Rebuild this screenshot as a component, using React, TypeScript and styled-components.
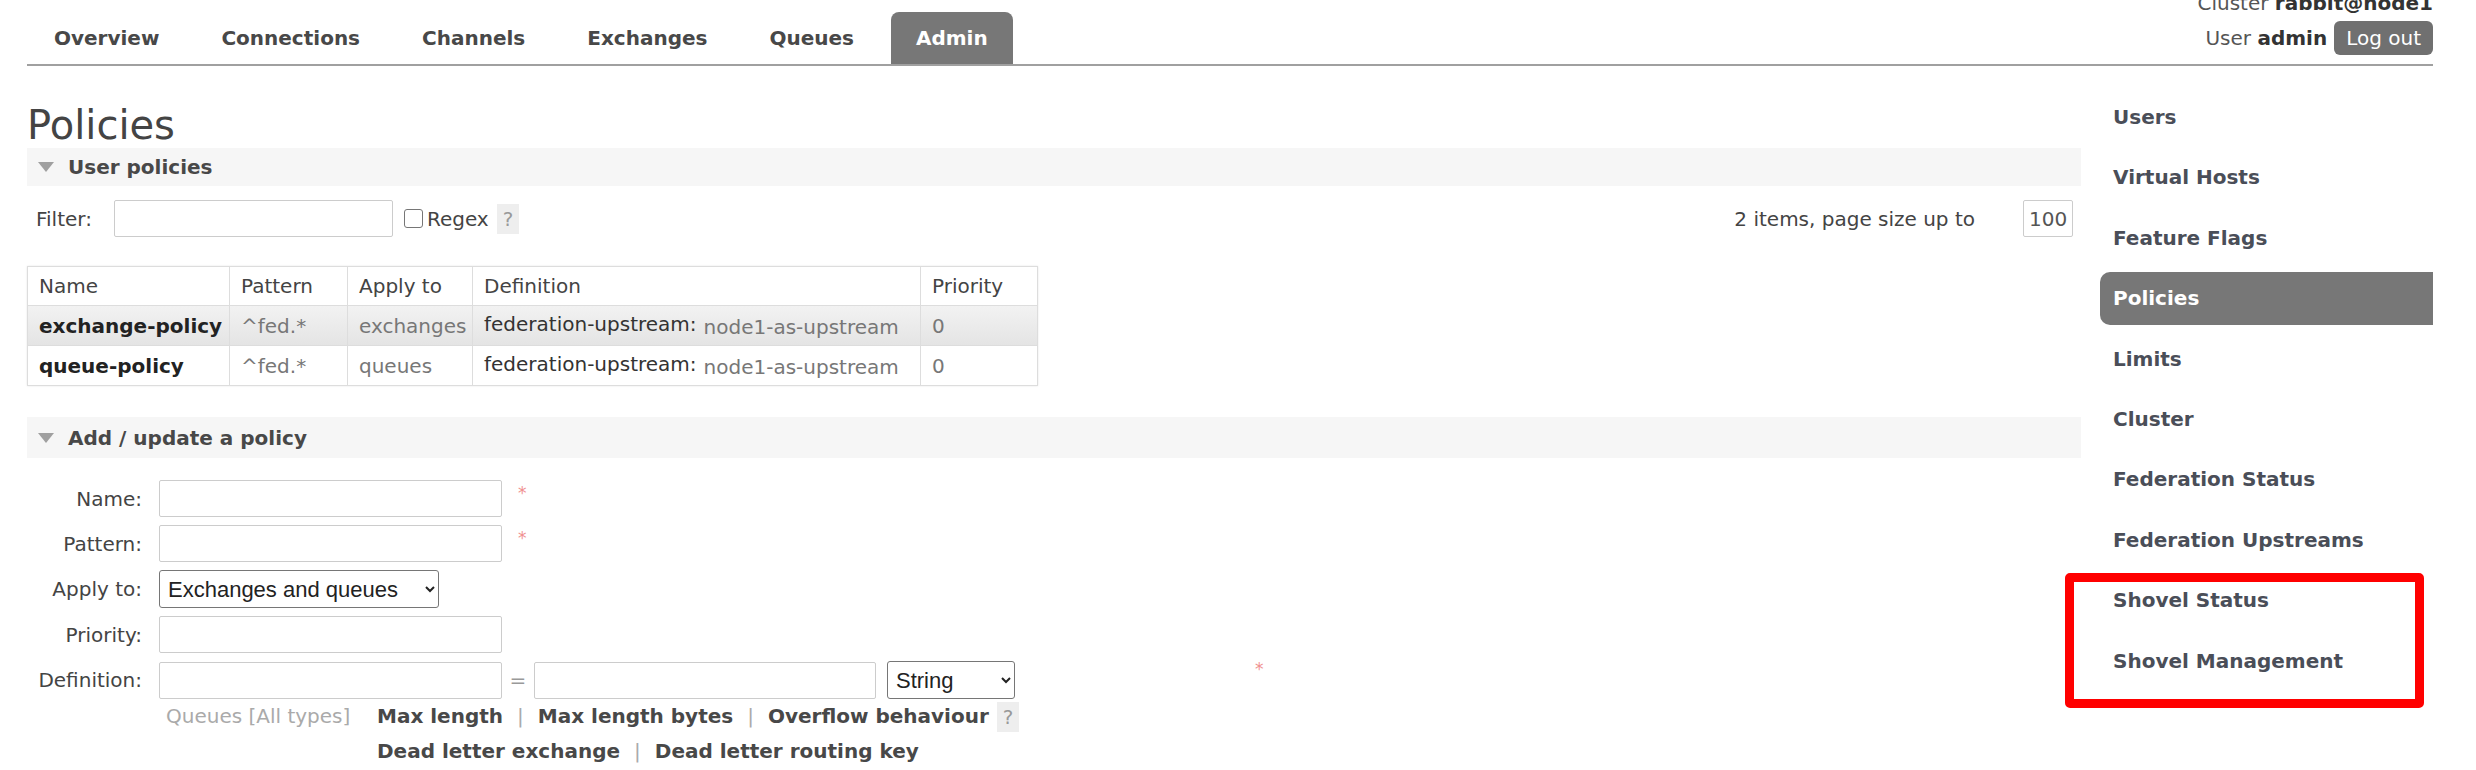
import React from "react";
import styled, { createGlobalStyle } from "styled-components";

const font = `"DejaVu Sans", Verdana, sans-serif`;

const GlobalStyle = createGlobalStyle`
  body {
    margin: 0;
    background: #fff;
    color: #444;
    font-family: ${font};
    font-size: 20px;
  }
`;

const Header = styled.header`
  display: flex;
  justify-content: space-between;
  align-items: flex-end;
  height: 66px;
  margin: 0 43px 0 27px;
  border-bottom: 2px solid #a0a0a0;
  box-sizing: border-box;
`;

const Tabs = styled.nav`
  display: flex;
  gap: 12px;
  padding-left: 2px;
`;

const Tab = styled.a<{ $active?: boolean }>`
  display: block;
  height: 52px;
  line-height: 52px;
  padding: 0 25px;
  font-size: 20px;
  font-weight: bold;
  text-decoration: none;
  color: ${(p) => (p.$active ? "#fff" : "#484848")};
  background: ${(p) => (p.$active ? "#777" : "transparent")};
  border-radius: 8px 8px 0 0;
`;

const Session = styled.div`
  align-self: flex-start;
  margin-top: -15px;
  display: flex;
  flex-direction: column;
  align-items: flex-end;
  color: #555;
`;

const SessionLine = styled.div`
  display: flex;
  align-items: center;
  gap: 7px;
  height: 35px;
  b {
    color: #333;
  }
`;

const LogOut = styled.button`
  height: 34px;
  padding: 0 12px;
  border: none;
  border-radius: 6px;
  background: #707070;
  color: #fff;
  font-family: ${font};
  font-size: 20px;
`;

const Layout = styled.div`
  display: flex;
  align-items: flex-start;
`;

const Main = styled.main`
  flex: 1;
  min-width: 0;
  padding-left: 27px;
`;

const Title = styled.h1`
  margin: 36px 0 0;
  height: 46px;
  line-height: 46px;
  font-size: 40px;
  font-weight: normal;
  color: #444;
`;

const SectionBar = styled.div<{ $h: number }>`
  display: flex;
  align-items: center;
  gap: 14px;
  height: ${(p) => p.$h}px;
  padding-left: 11px;
  background: #f6f6f6;
  font-size: 20px;
  font-weight: bold;
  color: #484848;
`;

const Caret = styled.span`
  width: 0;
  height: 0;
  border-left: 8.5px solid transparent;
  border-right: 8.5px solid transparent;
  border-top: 10px solid #a0a0a0;
`;

const FilterRow = styled.div`
  display: flex;
  align-items: center;
  justify-content: space-between;
  margin-top: 14px;
  padding: 0 8px 0 9px;
`;

const FilterLeft = styled.div`
  display: flex;
  align-items: center;
`;

const TextInput = styled.input<{ $w: number }>`
  width: ${(p) => p.$w}px;
  height: 37px;
  box-sizing: border-box;
  border: 1px solid #ccc;
  border-radius: 2px;
  font-family: ${font};
  font-size: 20px;
  color: #444;
  padding: 0 5px;
`;

const FilterLabel = styled.span`
  margin-right: 22px;
`;

const Check = styled.span`
  display: inline-block;
  width: 17px;
  height: 17px;
  margin: 0 4px 0 11px;
  border: 1px solid #767676;
  border-radius: 3px;
  background: #fff;
`;

const Help = styled.span`
  display: inline-block;
  margin-left: 8px;
  padding: 0 6px;
  line-height: 30px;
  background: #eee;
  color: #999;
`;

const PageSize = styled.div`
  display: flex;
  align-items: center;
  gap: 48px;
  input {
    text-align: right;
    color: #555;
  }
`;

const Table = styled.table`
  width: 1010px;
  table-layout: fixed;
  margin-top: 29px;
  border-collapse: collapse;
  border: 1px solid #ddd;
  box-shadow: 0 0 2px #e6e6e6;
  th,
  td {
    border: 1px solid #ddd;
    padding: 0 4px 0 11px;
    text-align: left;
    white-space: nowrap;
    overflow: hidden;
  }
  th {
    height: 38px;
    font-weight: normal;
    color: #444;
  }
`;

const Col = styled.col<{ $w: number }>`
  width: ${(p) => p.$w}px;
`;

const Row = styled.tr<{ $alt?: boolean }>`
  height: 40px;
  background: ${(p) =>
    p.$alt ? "linear-gradient(#f2f2f2, #e4e4e4)" : "#fff"};
`;

const Cell = styled.td<{ $tone?: "strong" | "muted" }>`
  font-weight: ${(p) => (p.$tone === "strong" ? "bold" : "normal")};
  color: ${(p) =>
    p.$tone === "strong" ? "#222" : p.$tone === "muted" ? "#777" : "#444"};
`;

const DefKey = styled.span`
  vertical-align: 3px;
  color: #333;
  margin-right: 7px;
`;

const DefValue = styled.span`
  color: #777;
`;

const AddBar = styled.div`
  margin-top: 31px;
`;

const Form = styled.div`
  display: flex;
  flex-direction: column;
  gap: 8px;
  margin-top: 22px;
`;

const FormRow = styled.div`
  display: flex;
  align-items: center;
`;

const Label = styled.label`
  width: 115px;
  margin-right: 17px;
  text-align: right;
`;

const Required = styled.span<{ $gap: number; $top: number }>`
  align-self: flex-start;
  margin: ${(p) => p.$top}px 0 0 ${(p) => p.$gap}px;
  color: #f09090;
  font-size: 17px;
`;

const Select = styled.select<{ $w: number; $ml?: number }>`
  width: ${(p) => p.$w}px;
  height: 38px;
  margin-left: ${(p) => p.$ml ?? 0}px;
  border: 1px solid #767676;
  border-radius: 3px;
  background: #fff;
  font-family: "Liberation Sans", Arial, sans-serif;
  font-size: 22px;
  color: #222;
  padding: 0 4px;
`;

const Equals = styled.span`
  width: 32px;
  text-align: center;
  color: #999;
`;

const Hints = styled.div`
  display: grid;
  grid-template-columns: 211px auto;
  margin: 0 0 0 139px;
  line-height: 35px;
`;

const HintGroup = styled.span`
  color: #aaa;
`;

const HintLinks = styled.div`
  display: flex;
  flex-direction: column;
`;

const HintLine = styled.div`
  display: flex;
  align-items: center;
`;

const HintLink = styled.a`
  font-weight: bold;
  color: #484848;
  text-decoration: none;
`;

const Sep = styled.span`
  color: #aaa;
  margin: 0 14px;
`;

const Sidebar = styled.aside`
  width: 333px;
  margin: 25px 43px 0 19px;
  display: flex;
  flex-direction: column;
  gap: 8px;
`;

const NavItem = styled.a<{ $active?: boolean }>`
  display: block;
  height: 52.4px;
  line-height: 52px;
  padding-left: 13px;
  font-size: 20px;
  font-weight: bold;
  text-decoration: none;
  color: ${(p) => (p.$active ? "#fff" : "#4a4e58")};
  background: ${(p) => (p.$active ? "#777" : "transparent")};
  border-radius: 10px 0 0 10px;
`;

const Highlight = styled.div`
  position: relative;
  display: flex;
  flex-direction: column;
  gap: 8px;
  &::after {
    content: "";
    position: absolute;
    top: -1px;
    bottom: -21px;
    left: -35px;
    right: 9px;
    border: 9px solid #ff0000;
    border-radius: 5px;
    pointer-events: none;
  }
`;

const tabs = ["Overview", "Connections", "Channels", "Exchanges", "Queues", "Admin"];
const nav = [
  "Users",
  "Virtual Hosts",
  "Feature Flags",
  "Policies",
  "Limits",
  "Cluster",
  "Federation Status",
  "Federation Upstreams",
];

const policies = [
  { name: "exchange-policy", pattern: "^fed.*", apply: "exchanges" },
  { name: "queue-policy", pattern: "^fed.*", apply: "queues" },
];

export default function App() {
  return (
    <>
      <GlobalStyle />
      <Header>
        <Tabs>
          {tabs.map((t) => (
            <Tab key={t} $active={t === "Admin"}>
              {t}
            </Tab>
          ))}
        </Tabs>
        <Session>
          <SessionLine>
            <span>
              Cluster <b>rabbit@node1</b>
            </span>
          </SessionLine>
          <SessionLine>
            <span>
              User <b>admin</b>
            </span>
            <LogOut>Log out</LogOut>
          </SessionLine>
        </Session>
      </Header>
      <Layout>
        <Main>
          <Title>Policies</Title>
          <SectionBar $h={38}>
            <Caret />
            User policies
          </SectionBar>
          <FilterRow>
            <FilterLeft>
              <FilterLabel>Filter:</FilterLabel>
              <TextInput $w={279} />
              <Check />
              <span>Regex</span>
              <Help>?</Help>
            </FilterLeft>
            <PageSize>
              <span>2 items, page size up to</span>
              <TextInput $w={50} defaultValue="100" />
            </PageSize>
          </FilterRow>
          <Table>
            <colgroup>
              <Col $w={202} />
              <Col $w={118} />
              <Col $w={125} />
              <Col $w={448} />
              <Col $w={117} />
            </colgroup>
            <thead>
              <tr>
                <th>Name</th>
                <th>Pattern</th>
                <th>Apply to</th>
                <th>Definition</th>
                <th>Priority</th>
              </tr>
            </thead>
            <tbody>
              {policies.map((p, i) => (
                <Row key={p.name} $alt={i === 0}>
                  <Cell $tone="strong">{p.name}</Cell>
                  <Cell $tone="muted">{p.pattern}</Cell>
                  <Cell $tone="muted">{p.apply}</Cell>
                  <Cell>
                    <DefKey>federation-upstream:</DefKey>
                    <DefValue>node1-as-upstream</DefValue>
                  </Cell>
                  <Cell $tone="muted">0</Cell>
                </Row>
              ))}
            </tbody>
          </Table>
          <AddBar>
            <SectionBar $h={41}>
              <Caret />
              Add / update a policy
            </SectionBar>
          </AddBar>
          <Form>
            <FormRow>
              <Label>Name:</Label>
              <TextInput $w={343} />
              <Required $gap={16} $top={3}>*</Required>
            </FormRow>
            <FormRow>
              <Label>Pattern:</Label>
              <TextInput $w={343} />
              <Required $gap={16} $top={3}>*</Required>
            </FormRow>
            <FormRow>
              <Label>Apply to:</Label>
              <Select $w={280} defaultValue="both">
                <option value="both">Exchanges and queues</option>
              </Select>
            </FormRow>
            <FormRow>
              <Label>Priority:</Label>
              <TextInput $w={343} />
            </FormRow>
            <FormRow>
              <Label>Definition:</Label>
              <TextInput $w={343} />
              <Equals>=</Equals>
              <TextInput $w={342} />
              <Select $w={128} $ml={11} defaultValue="string">
                <option value="string">String</option>
              </Select>
              <Required $gap={240} $top={-2}>*</Required>
            </FormRow>
          </Form>
          <Hints>
            <HintGroup>Queues [All types]</HintGroup>
            <HintLinks>
              <HintLine>
                <HintLink>Max length</HintLink>
                <Sep>|</Sep>
                <HintLink>Max length bytes</HintLink>
                <Sep>|</Sep>
                <HintLink>Overflow behaviour</HintLink>
                <Help>?</Help>
              </HintLine>
              <HintLine>
                <HintLink>Dead letter exchange</HintLink>
                <Sep>|</Sep>
                <HintLink>Dead letter routing key</HintLink>
              </HintLine>
            </HintLinks>
          </Hints>
        </Main>
        <Sidebar>
          {nav.map((n) => (
            <NavItem key={n} $active={n === "Policies"}>
              {n}
            </NavItem>
          ))}
          <Highlight>
            <NavItem>Shovel Status</NavItem>
            <NavItem>Shovel Management</NavItem>
          </Highlight>
        </Sidebar>
      </Layout>
    </>
  );
}
